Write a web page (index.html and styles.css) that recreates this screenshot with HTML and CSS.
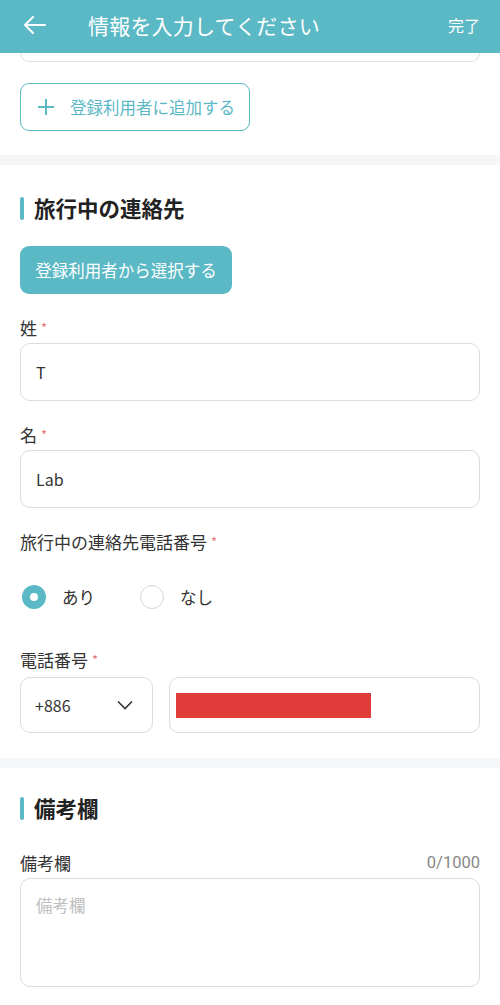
FILE: index.html
```html
<!DOCTYPE html>
<html lang="ja">
<head>
<meta charset="utf-8">
<link rel="stylesheet" href="styles.css">
</head>
<body>
<header class="topbar">
  <svg class="back" width="24" height="18" viewBox="0 0 24 18"><path d="M22 9H2M10 1L2 9l8 8" fill="none" stroke="#fff" stroke-width="2" stroke-linecap="round" stroke-linejoin="round"/></svg>
  <h1 class="topbar-title">情報を入力してください</h1>
  <span class="topbar-done">完了</span>
</header>

<section class="block block-first">
  <div class="clipped-input"></div>
  <button class="btn-outline"><svg width="18" height="18" viewBox="0 0 18 18"><path d="M9 1v16M1 9h16" stroke="#5bb8c5" stroke-width="2"/></svg><span>登録利用者に追加する</span></button>
</section>

<section class="block block-contact">
  <h2 class="sec-title">旅行中の連絡先</h2>
  <button class="btn-fill">登録利用者から選択する</button>

  <label class="field-label lbl-first">姓<span class="req">*</span></label>
  <div class="input">T</div>

  <label class="field-label">名<span class="req">*</span></label>
  <div class="input">Lab</div>

  <label class="field-label">旅行中の連絡先電話番号<span class="req">*</span></label>
  <div class="radios">
    <span class="radio"><span class="dot on"></span>あり</span>
    <span class="radio"><span class="dot"></span>なし</span>
  </div>

  <label class="field-label lbl-phone">電話番号<span class="req">*</span></label>
  <div class="phone-row">
    <div class="code">+886<svg width="16" height="10" viewBox="0 0 16 10"><path d="M1 1.5l7 7 7-7" fill="none" stroke="#333" stroke-width="1.6"/></svg></div>
    <div class="number"><span class="redact"></span></div>
  </div>
</section>

<section class="block block-notes">
  <h2 class="sec-title">備考欄</h2>
  <div class="notes-head"><span class="notes-label">備考欄</span><span class="counter">0/1000</span></div>
  <div class="textarea">備考欄</div>
</section>
</body>
</html>
```
FILE: styles.css
```css
* { box-sizing: border-box; }
html, body { margin: 0; padding: 0; }
body {
  width: 500px;
  height: 1005px;
  overflow: hidden;
  background: #f5f6f8;
  font-family: "Noto Sans CJK JP", "Noto Sans", sans-serif;
  color: #333;
}
.topbar {
  height: 53px;
  background: #5bb8c5;
  display: flex;
  align-items: center;
  padding: 0 20px 4px 23px;
  color: #fff;
}
.back { flex: none; }
.topbar-title {
  margin: 0 0 0 41px;
  font-size: 21px;
  font-weight: 400;
  flex: 1;
  letter-spacing: 0.2px;
}
.topbar-done { font-size: 16px; }

.block { background: #fff; padding: 0 20px; }
.block-first { padding-bottom: 24px; margin-bottom: 10px; }
.clipped-input {
  height: 9px;
  border: 1px solid #e8dde6;
  border-top: none;
  border-radius: 0 0 10px 10px;
}
.btn-outline {
  margin-top: 21px;
  height: 48px;
  width: 230px;
  border: 1.5px solid #5bb8c5;
  border-radius: 9px;
  background: #fff;
  color: #5bb8c5;
  font-family: inherit;
  font-size: 16.5px;
  display: flex;
  align-items: center;
  padding: 0 0 0 16px;
  gap: 15px;
}

.block-contact { padding-top: 29px; padding-bottom: 25px; margin-bottom: 10px; }
.sec-title {
  margin: 0;
  height: 28px;
  line-height: 28px;
  font-size: 21.5px;
  font-weight: 700;
  color: #222;
  display: flex;
  align-items: center;
  gap: 10px;
}
.sec-title::before {
  content: "";
  width: 4px;
  height: 23px;
  background: #5bb8c5;
  border-radius: 2px;
}
.btn-fill {
  margin-top: 24px;
  height: 48px;
  width: 212px;
  border: none;
  border-radius: 9px;
  background: #5bb8c5;
  color: #fff;
  font-family: inherit;
  font-size: 16.5px;
  padding: 0;
}
.field-label {
  display: block;
  margin-top: 23px;
  height: 22px;
  line-height: 22px;
  font-size: 17px;
}
.lbl-first { margin-top: 23px; }
.req { color: #e07a7a; font-size: 13px; margin-left: 4px; vertical-align: top; line-height: 22px; }
.input {
  margin-top: 4px;
  height: 58px;
  border: 1px solid #dcdcdc;
  border-radius: 10px;
  padding: 0 15px;
  display: flex;
  align-items: center;
  font-size: 16px;
}
.radios {
  margin-top: 32px;
  height: 24px;
  display: flex;
  align-items: center;
  gap: 43px;
  font-size: 16.5px;
}
.radio { display: flex; align-items: center; gap: 16px; padding-left: 2px; }
.dot {
  width: 24px;
  height: 24px;
  border-radius: 50%;
  border: 1.5px solid #d6d6d6;
  display: inline-block;
}
.dot.on { border: 8px solid #5bb8c5; }
.lbl-phone { margin-top: 40px; }
.phone-row { margin-top: 6px; display: flex; gap: 16px; height: 56px; }
.code {
  width: 133px;
  border: 1px solid #dcdcdc;
  border-radius: 10px;
  display: flex;
  align-items: center;
  justify-content: space-between;
  padding: 0 19px 0 14px;
  font-size: 16px;
}
.number {
  flex: 1;
  border: 1px solid #dcdcdc;
  border-radius: 10px;
  display: flex;
  align-items: center;
  padding-left: 6px;
}
.redact { width: 195px; height: 25px; background: #e03c3a; }

.block-notes { padding-top: 26px; height: 237px; }
.notes-head {
  margin-top: 29px;
  display: flex;
  justify-content: space-between;
  align-items: center;
  height: 22px;
  font-size: 17px;
}
.counter { color: #888; font-size: 16.5px; font-family: "Roboto", sans-serif; }
.textarea {
  margin-top: 5px;
  height: 109px;
  border: 1px solid #dcdcdc;
  border-radius: 10px;
  padding: 14px 15px;
  color: #c0c0c0;
  font-size: 16.5px;
}
```
